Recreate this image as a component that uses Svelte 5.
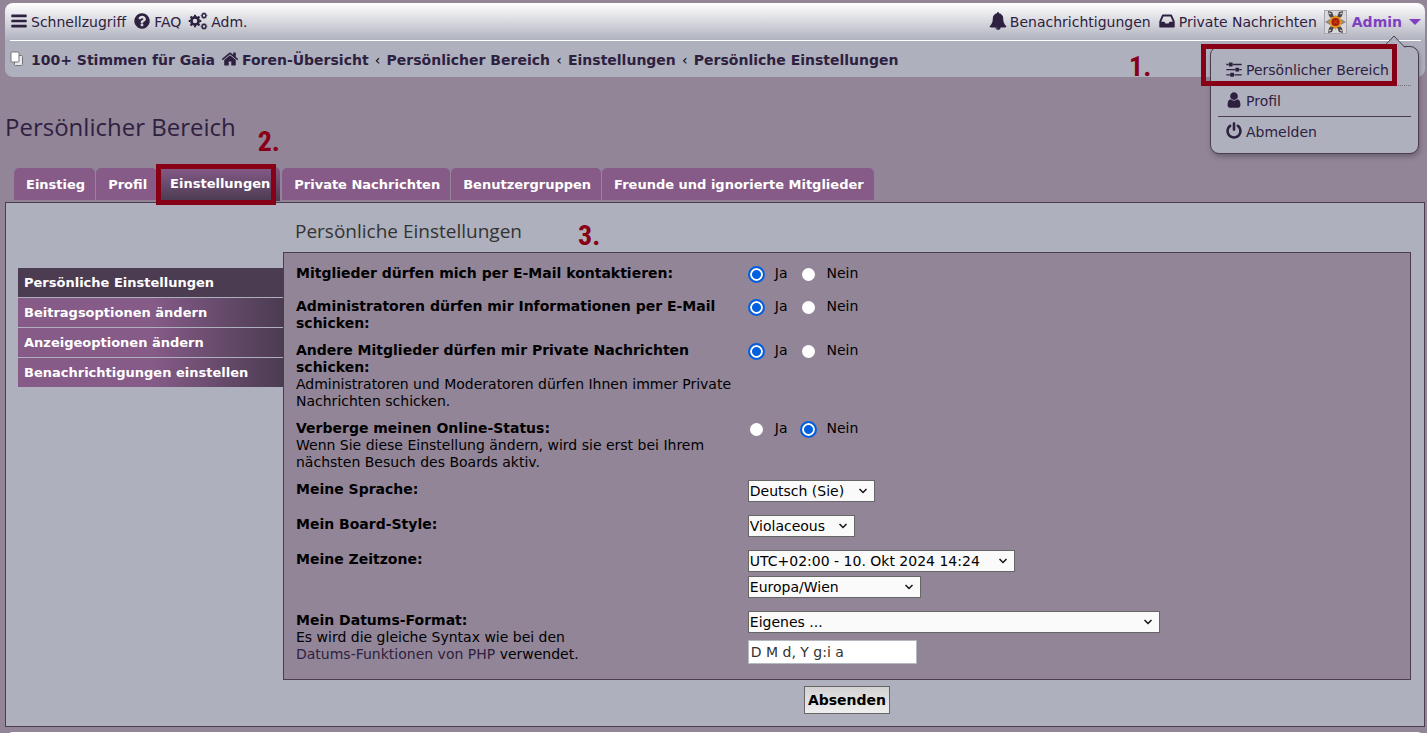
<script lang="ts">
	type IconName = 'bars' | 'question' | 'home' | 'bell' | 'inbox' | 'sliders' | 'user' | 'power';

	const icons: Record<IconName, string> = {
		bars: 'M1664 1344v128q0 26-19 45t-45 19h-1408q-26 0-45-19t-19-45v-128q0-26 19-45t45-19h1408q26 0 45 19t19 45zm0-512v128q0 26-19 45t-45 19h-1408q-26 0-45-19t-19-45v-128q0-26 19-45t45-19h1408q26 0 45 19t19 45zm0-512v128q0 26-19 45t-45 19h-1408q-26 0-45-19t-19-45v-128q0-26 19-45t45-19h1408q26 0 45 19t19 45z',
		question:
			'M1024 1376v-192q0-14-9-23t-23-9h-192q-14 0-23 9t-9 23v192q0 14 9 23t23 9h192q14 0 23-9t9-23zm256-672q0-88-55.5-163t-138.5-116-170-41q-243 0-371 213-15 24 8 42l132 100q7 6 19 6 16 0 25-12 53-68 86-92 34-24 86-24 48 0 85.5 26t37.5 59q0 38-20 61t-68 45q-63 28-115.5 86.5t-52.5 125.5v36q0 14 9 23t23 9h192q14 0 23-9t9-23q0-19 21.5-49.5t54.5-49.5q32-18 49-28.5t46-35 44.5-48 28-60.5 12.5-81zm384 192q0 209-103 385.5t-279.5 279.5-385.5 103-385.5-103-279.5-279.5-103-385.5 103-385.5 279.5-279.5 385.5-103 385.5 103 279.5 279.5 103 385.5z',
		home: 'M1472 992v480q0 26-19 45t-45 19h-384v-384h-256v384h-384q-26 0-45-19t-19-45v-480q0-1 .5-3t.5-3l575-474 575 474q1 2 1 6zm223-69l-62 74q-8 9-21 11h-3q-13 0-21-7l-692-577-692 577q-12 8-24 7-13-2-21-11l-62-74q-8-10-7-23.5t11-21.5l719-599q32-26 76-26t76 26l244 204v-195q0-14 9-23t23-9h192q14 0 23 9t9 23v408l219 182q10 8 11 21.5t-7 23.5z',
		bell: 'M912 1696q0-16-16-16-59 0-101.5-42.5t-42.5-101.5q0-16-16-16t-16 16q0 73 51.5 124.5t124.5 51.5q16 0 16-16zm816-288q0 52-38 90t-90 38h-448q0 106-75 181t-181 75-181-75-75-181h-448q-52 0-90-38t-38-90q50-42 91-88t85-119.5 74.5-158.5 50-206 19.5-260q0-152 117-282.5t307-158.5q-8-19-8-39 0-40 28-68t68-28 68 28 28 68q0 20-8 39 190 28 307 158.5t117 282.5q0 139 19.5 260t50 206 74.5 158.5 85 119.5 91 88z',
		inbox: 'M1151 960h316q-1-3-2.5-8t-2.5-8l-212-496h-708l-212 496q-1 2-2.5 8t-2.5 8h316l95 192h320zm513 30v482q0 26-19 45t-45 19h-1408q-26 0-45-19t-19-45v-482q0-62 25-123l238-552q10-25 36.5-42t52.5-17h832q26 0 52.5 17t36.5 42l238 552q25 61 25 123z',
		sliders:
			'M480 1408v128h-352v-128h352zm352-128q26 0 45 19t19 45v256q0 26-19 45t-45 19h-256q-26 0-45-19t-19-45v-256q0-26 19-45t45-19h256zm160-384v128h-864v-128h864zm-640-512v128h-224v-128h224zm1312 1024v128h-736v-128h736zm-960-1152q26 0 45 19t19 45v256q0 26-19 45t-45 19h-256q-26 0-45-19t-19-45v-256q0-26 19-45t45-19h256zm640 512q26 0 45 19t19 45v256q0 26-19 45t-45 19h-256q-26 0-45-19t-19-45v-256q0-26 19-45t45-19h256zm320 128v128h-224v-128h224zm0-512v128h-864v-128h864z',
		user: 'M1536 1399q0 109-62.5 187t-150.5 78h-854q-88 0-150.5-78t-62.5-187q0-85 8.5-160.5t31.5-152 58.5-131 94-89 134.5-34.5q131 128 313 128t313-128q76 0 134.5 34.5t94 89 58.5 131 31.5 152 8.5 160.5zm-256-887q0 159-112.5 271.5t-271.5 112.5-271.5-112.5-112.5-271.5 112.5-271.5 271.5-112.5 271.5 112.5 112.5 271.5z',
		power: 'M1664 896q0 156-61 298t-164 245-245 164-298 61-298-61-245-164-164-245-61-298q0-182 80.5-343t226.5-270q43-32 95.5-25t83.5 50q32 42 24.5 94.5t-49.5 84.5q-98 74-151.5 181t-53.5 228q0 104 40.5 198.5t109.5 163.5 163.5 109.5 198.5 40.5 198.5-40.5 163.5-109.5 109.5-163.5 40.5-198.5q0-121-53.5-228t-151.5-181q-42-32-49.5-84.5t24.5-94.5q31-43 84-50t95 25q146 109 226.5 270t80.5 343zm-640-768v640q0 52-38 90t-90 38-90-38-38-90v-640q0-52 38-90t90-38 90 38 38 90z'
	};

	const crumbs = ['Foren-Übersicht', 'Persönlicher Bereich', 'Einstellungen', 'Persönliche Einstellungen'];

	const tabs = [
		'Einstieg',
		'Profil',
		'Einstellungen',
		'Private Nachrichten',
		'Benutzergruppen',
		'Freunde und ignorierte Mitglieder'
	];
	const activeTab = 'Einstellungen';

	const sections = [
		'Persönliche Einstellungen',
		'Beitragsoptionen ändern',
		'Anzeigeoptionen ändern',
		'Benachrichtigungen einstellen'
	];
	const activeSection = 'Persönliche Einstellungen';

	let switches = $state([
		{ id: 'viewemail', label: 'Mitglieder dürfen mich per E-Mail kontaktieren:', hint: '', value: 'Ja' },
		{
			id: 'massemail',
			label: 'Administratoren dürfen mir Informationen per E-Mail schicken:',
			hint: '',
			value: 'Ja'
		},
		{
			id: 'allowpm',
			label: 'Andere Mitglieder dürfen mir Private Nachrichten schicken:',
			hint: 'Administratoren und Moderatoren dürfen Ihnen immer Private Nachrichten schicken.',
			value: 'Ja'
		},
		{
			id: 'hideonline',
			label: 'Verberge meinen Online-Status:',
			hint: 'Wenn Sie diese Einstellung ändern, wird sie erst bei Ihrem nächsten Besuch des Boards aktiv.',
			value: 'Nein'
		}
	]);

	let dateFormat = $state('D M d, Y g:i a');
</script>

{#snippet icon(name: IconName)}
	<svg class="icon" viewBox="0 0 1792 1792" aria-hidden="true"><path d={icons[name]} /></svg>
{/snippet}

{#snippet gear(cx: number, cy: number, r: number)}
	<circle {cx} {cy} {r} fill="none" stroke="currentColor" stroke-width={r * 0.75} />
	<circle
		{cx}
		{cy}
		r={r * 1.5}
		fill="none"
		stroke="currentColor"
		stroke-width={r * 0.5}
		pathLength="16"
		stroke-dasharray="1 1"
		stroke-dashoffset="0.5"
	/>
{/snippet}

<div class="wrap">
	<header class="navbar">
		<nav class="nav-main">
			<ul>
				<li><a href="#quick">{@render icon('bars')}<span>Schnellzugriff</span></a></li>
				<li><a href="#faq">{@render icon('question')}<span>FAQ</span></a></li>
				<li>
					<a href="#acp">
						<svg class="icon icon-cogs" viewBox="0 0 20 18" aria-hidden="true">
							{@render gear(7, 9, 3.6)}
							{@render gear(16, 3.6, 1.9)}
							{@render gear(16, 14.4, 1.9)}
						</svg><span>Adm.</span>
					</a>
				</li>
			</ul>
			<ul>
				<li><a href="#notifications">{@render icon('bell')}<span>Benachrichtigungen</span></a></li>
				<li><a href="#pm">{@render icon('inbox')}<span>Private Nachrichten</span></a></li>
				<li class="account">
					<button type="button" class="username" aria-expanded="true">
						<svg class="avatar" viewBox="0 0 23 24" aria-hidden="true">
							<rect x=".5" y=".5" width="22" height="23" fill="#dad8dc" stroke="#aaa5ae" />
							<g fill="#4a494d">
								<path d="M4 1l4 1 2 5-2 2-3-3zM19 1l-4 1-2 5 2 2 3-3zM4 23l4-1 2-5-2-2-3 3zM19 23l-4-1-2-5 2-2 3 3z" />
								<path d="M1 12l5-3 2 3-2 3zM22 12l-5-3-2 3 2 3z" fill="#8a878c" />
							</g>
							<path d="M11.500 5l2 2 3 0 0 3 2.500 2-2.500 2 0 3-3 0-2 3-2-3-3 0 0-3-2.500-2 2.500-2 0-3 3 0z" fill="#e0901c" />
							<circle cx="11.500" cy="12" r="4" fill="#a41d08" />
							<path d="M9.500 10l4 4M13.500 10l-4 4" stroke="#d9480f" />
							<path d="M5 3l2 1M18 3l-2 1M5 21l2-1M18 21l-2-1" stroke="#f4f4f4" />
						</svg>
						<span>Admin</span>
						<svg class="caret" viewBox="0 0 12 6" aria-hidden="true"><path d="M0 0h12l-6 6z" /></svg>
					</button>
					<div class="dropdown">
						<svg class="pointer" viewBox="0 0 24 13" aria-hidden="true">
							<path d="M1 12.500L12 1l11 11.500" fill="#aeb0bd" stroke="#4b3c52" />
						</svg>
						<ul>
							<li>
								<a href="#ucp">{@render icon('sliders')}<span>Persönlicher Bereich</span></a>
							</li>
							<li><a href="#profile">{@render icon('user')}<span>Profil</span></a></li>
							<li class="separator">
								<a href="#logout">{@render icon('power')}<span>Abmelden</span></a>
							</li>
						</ul>
						<div class="frame frame-menu"></div>
						<span class="step step-one">1.</span>
					</div>
				</li>
			</ul>
		</nav>
		<nav class="breadcrumbs">
			<a class="site" href="#site">
				<svg class="pages" viewBox="0 0 14 16" aria-hidden="true">
					<rect x="4.500" y="4.500" width="8" height="10" rx="1" fill="#e8e8ea" stroke="#77757b" />
					<rect x="1" y="1" width="8" height="10" rx="1" fill="#fff" stroke="#77757b" />
				</svg>
				<span>100+ Stimmen für Gaia</span>
			</a>
			{#each crumbs as crumb, i}
				{#if i > 0}<span class="sep">‹</span>{/if}
				<a href="#crumb-{i}">{#if i === 0}{@render icon('home')}{/if}<span>{crumb}</span></a>
			{/each}
		</nav>
	</header>

	<h2><span class="stepped">Persönlicher Bereich<span class="step step-two">2.</span></span></h2>

	<nav class="tabs">
		{#each tabs as tab}
			<a href="#tab" class:active={tab === activeTab}>
				{tab}
				{#if tab === activeTab}<span class="frame frame-tab"></span>{/if}
			</a>
		{/each}
	</nav>

	<main class="panel">
		<nav class="side">
			{#each sections as section}
				<a href="#section" class:active={section === activeSection}>{section}</a>
			{/each}
		</nav>

		<form onsubmit={(e) => e.preventDefault()}>
			<h3><span class="stepped">Persönliche Einstellungen<span class="step step-three">3.</span></span></h3>

			<div class="fields">
				{#each switches as item}
					<div class="row" role="radiogroup" aria-labelledby="{item.id}-label">
						<div class="term">
							<strong id="{item.id}-label">{item.label}</strong>
							{#if item.hint}<span>{item.hint}</span>{/if}
						</div>
						<div class="radios">
							{#each ['Ja', 'Nein'] as option}
								<label>
									<input type="radio" name={item.id} value={option} bind:group={item.value} />{option}
								</label>
							{/each}
						</div>
					</div>
				{/each}

				<div class="row">
					<div class="term"><label for="lang">Meine Sprache:</label></div>
					<div class="value">
						<select id="lang" class="w-lang"><option>Deutsch (Sie)</option></select>
					</div>
				</div>
				<div class="row">
					<div class="term"><label for="style">Mein Board-Style:</label></div>
					<div class="value">
						<select id="style" class="w-style"><option>Violaceous</option></select>
					</div>
				</div>
				<div class="row">
					<div class="term"><label for="tz-date">Meine Zeitzone:</label></div>
					<div class="value">
						<select id="tz-date" class="w-date"><option>UTC+02:00 - 10. Okt 2024 14:24</option></select>
						<select aria-label="Zeitzone" class="w-zone"><option>Europa/Wien</option></select>
					</div>
				</div>
				<div class="row">
					<div class="term">
						<label for="dateoptions">Mein Datums-Format:</label>
						<span>
							Es wird die gleiche Syntax wie bei den<br />
							<a href="#php">Datums-Funktionen von PHP</a> verwendet.
						</span>
					</div>
					<div class="value">
						<select id="dateoptions" class="w-format"><option>Eigenes ...</option></select>
						<input type="text" aria-label="Eigenes Datums-Format" bind:value={dateFormat} />
					</div>
				</div>
			</div>

			<div class="submit"><button type="submit">Absenden</button></div>
		</form>
	</main>

	<footer class="footbar"></footer>
</div>

<style>
	:global(body) {
		background: #928598;
	}

	.wrap {
		--ink: #2e2140;
		--line: #4b3c52;
		--plum: #865b88;
		--mist: #aeb0bd;
		--mark: #870016;

		box-sizing: border-box;
		height: 100vh;
		overflow: hidden;
		padding: 3px 2px 0 5px;
		font-family: Verdana, 'DejaVu Sans', sans-serif;
		font-size: 14px;
		line-height: 17px;
		color: #000;
	}

	.wrap * {
		box-sizing: border-box;
	}

	a {
		color: var(--ink);
		text-decoration: none;
	}

	ul {
		list-style: none;
		margin: 0;
		padding: 0;
	}

	.icon {
		width: 18px;
		height: 18px;
		margin-bottom: 3px;
		flex: none;
		fill: currentColor;
	}

	/* Header bar */
	.navbar {
		padding: 0 4px 0 5px;
		border-radius: 8px;
		background: linear-gradient(#fff 0, #aeb0bd 38px);
	}

	.nav-main {
		display: flex;
		justify-content: space-between;
		height: 38px;
		border-bottom: 1px solid #fff;
	}

	.nav-main > ul {
		display: flex;
		align-items: center;
		gap: 7px;
		padding-top: 1px;
	}

	.nav-main a,
	.username,
	.breadcrumbs a {
		display: flex;
		align-items: center;
		gap: 3px;
	}

	.icon-cogs {
		width: 20px;
	}

	.account {
		position: relative;
	}

	.username {
		gap: 5px;
		padding: 0;
		border: 0;
		background: none;
		font: bold 14px/17px Verdana, 'DejaVu Sans', sans-serif;
		color: #7f3fbf;
	}

	.avatar {
		width: 23px;
		height: 24px;
	}

	.caret {
		width: 12px;
		height: 6px;
		margin-left: 2px;
		fill: currentColor;
	}

	.dropdown {
		position: absolute;
		z-index: 2;
		top: 36px;
		right: 2px;
		width: 209px;
		padding: 8px 7px 6px;
		border: 1px solid var(--line);
		border-radius: 9px;
		background: var(--mist);
		box-shadow: 1px 3px 5px rgb(0 0 0 / 25%);
	}

	.dropdown li + li {
		border-top: 1px dotted #77717f;
	}

	.dropdown li.separator {
		border-top: 1px solid var(--line);
	}

	.dropdown a {
		height: 30px;
		padding-left: 7px;
	}

	.pointer {
		position: absolute;
		top: -12px;
		right: 12px;
		width: 24px;
		height: 13px;
	}

	.breadcrumbs {
		display: flex;
		align-items: center;
		height: 36px;
		padding-top: 2px;
		font-weight: bold;
	}

	.breadcrumbs .site {
		gap: 7px;
		margin-right: 6px;
	}

	.pages {
		width: 14px;
		height: 16px;
		margin-bottom: 3px;
	}

	.sep {
		width: 18px;
		text-align: center;
		font-weight: normal;
	}

	/* Numbered marks on top of the page */
	.frame {
		position: absolute;
		border: 5px solid var(--mark);
	}

	.frame-menu {
		inset: -3px 21px auto -10px;
		height: 42px;
	}

	.frame-tab {
		inset: -3px 4px -4px -2px;
	}

	.stepped {
		position: relative;
	}

	.step {
		position: absolute;
		font: bold 28px/30px 'Liberation Sans Narrow', 'Roboto Condensed', Roboto, sans-serif;
		color: var(--mark);
	}

	.step-one {
		top: 5px;
		left: -82px;
	}

	.step-two {
		top: 17px;
		left: calc(100% + 22px);
	}

	.step-three {
		top: 3px;
		left: calc(100% + 56px);
	}

	/* Page title and tabs */
	h2,
	h3 {
		margin: 0;
		font-family: 'Trebuchet MS', 'Open Sans', sans-serif;
		font-weight: normal;
	}

	h2 {
		margin-top: 33px;
		font-size: 24px;
		line-height: 34px;
		color: var(--ink);
	}

	.tabs {
		display: flex;
		align-items: flex-end;
		gap: 1px;
		height: 58px;
		padding: 0 9px 2px;
		font-size: 13px;
		font-weight: bold;
	}

	.tabs a {
		position: relative;
		height: 32px;
		padding: 0 10px 0 12px;
		border-radius: 5px 5px 0 0;
		background: var(--plum);
		line-height: 34px;
		color: #fff;
	}

	.tabs .active {
		height: 34px;
		margin: 0 1px -1px 0;
		background: linear-gradient(var(--plum), var(--line));
	}

	/* Main panel */
	.panel {
		display: flex;
		padding: 0 13px 12px 12px;
		border: 1px solid var(--line);
		background: var(--mist);
	}

	.side {
		flex: none;
		width: 265px;
		padding-top: 65px;
		font-size: 13px;
		font-weight: bold;
	}

	.side a {
		display: block;
		height: 29px;
		margin-bottom: 1px;
		padding-left: 6px;
		background: linear-gradient(90deg, var(--plum) 50%, var(--line));
		line-height: 29px;
		color: #fff;
	}

	.side .active {
		background: var(--line);
	}

	form {
		flex: 1;
		min-width: 0;
	}

	h3 {
		padding: 14px 12px 7px;
		font-size: 19px;
		line-height: 28px;
		color: #333;
	}

	.fields {
		display: flex;
		flex-direction: column;
		gap: 10px;
		padding: 12px 12px 11px;
		border: 1px solid var(--line);
		background: #928598;
	}

	.row {
		display: flex;
	}

	.term {
		width: 40%;
	}

	.term strong,
	.term label {
		display: block;
		font-weight: bold;
	}

	.value {
		display: flex;
		flex: 1;
		flex-direction: column;
		align-items: flex-start;
		gap: 4px;
		margin-top: -1px;
		padding: 0 0 4px 11px;
	}

	.radios {
		display: flex;
		gap: 12px;
		min-height: 23px;
		padding-left: 11px;
	}

	.radios label {
		display: flex;
		align-items: flex-start;
		gap: 10px;
	}

	.radios input {
		appearance: none;
		width: 17px;
		height: 17px;
		margin: 1px 0 0;
		border: 2px solid transparent;
		border-radius: 50%;
		background: #fff padding-box;
	}

	.radios input:checked {
		border-color: #0060df;
		background: radial-gradient(circle, #0060df 4px, #fff 5px) padding-box;
	}

	select {
		height: 22px;
		padding: 0 22px 0 1px;
		border: 1px solid #666;
		border-radius: 0;
		appearance: none;
		background: #fafafa
			url("data:image/svg+xml,%3Csvg xmlns='http://www.w3.org/2000/svg' width='8' height='6'%3E%3Cpath d='M.5 1L4 4.500 7.500 1' fill='none' stroke='%23111' stroke-width='1.500'/%3E%3C/svg%3E")
			no-repeat right 7px center;
		font: inherit;
		color: #000;
	}

	.w-lang {
		width: 127px;
	}

	.w-style {
		width: 107px;
	}

	.w-date {
		width: 267px;
	}

	.w-zone {
		width: 173px;
	}

	.w-format {
		width: 412px;
	}

	.value input[type='text'] {
		width: 169px;
		height: 24px;
		margin-top: 3px;
		padding: 0 2px;
		border: 1px solid #b4bac0;
		background: #fff;
		font: inherit;
		color: #333;
	}

	.submit {
		display: flex;
		justify-content: center;
		padding-top: 6px;
	}

	.submit button {
		height: 28px;
		padding: 0 3px;
		border: 1px solid #666;
		background: linear-gradient(#d2d2d2, #efefef);
		font: inherit;
		font-weight: bold;
	}

	.footbar {
		height: 38px;
		margin-top: 5px;
		border-radius: 8px;
		background: linear-gradient(#fff, #aeb0bd);
	}
</style>
